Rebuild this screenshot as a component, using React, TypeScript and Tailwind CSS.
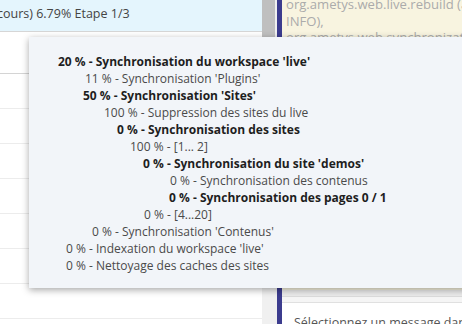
const LINES: { ml: string; bold?: boolean; text: string }[] = [
  { ml: "ml-[29px]", bold: true, text: "20 % - Synchronisation du workspace 'live'" },
  { ml: "ml-[56px]", text: "11 % - Synchronisation 'Plugins'" },
  { ml: "ml-[54px]", bold: true, text: "50 % - Synchronisation 'Sites'" },
  { ml: "ml-[75px]", text: "100 % - Suppression des sites du live" },
  { ml: "ml-[88px]", bold: true, text: "0 % - Synchronisation des sites" },
  { ml: "ml-[101px]", text: "100 % - [1... 2]" },
  { ml: "ml-[114px]", bold: true, text: "0 % - Synchronisation du site 'demos'" },
  { ml: "ml-[141px]", text: "0 % - Synchronisation des contenus" },
  { ml: "ml-[140px]", bold: true, text: "0 % - Synchronisation des pages 0 / 1" },
  { ml: "ml-[115px]", text: "0 % - [4...20]" },
  { ml: "ml-[63px]", text: "0 % - Synchronisation 'Contenus'" },
  { ml: "ml-[37px]", text: "0 % - Indexation du workspace 'live'" },
  { ml: "ml-[37px]", text: "0 % - Nettoyage des caches des sites" },
];

const ROWS = Array.from({ length: 8 });

export default function App() {
  return (
    <div className="relative flex h-[324px] w-[462px] overflow-hidden bg-white font-['Open_Sans',sans-serif] text-[12px]">
      {/* Left column */}
      <div className="flex w-[262px] shrink-0 flex-col">
        <div className="flex h-[32px] shrink-0 items-center overflow-hidden border-b border-[#d6d6d6] bg-[#e4f5fd] pb-[2px] text-[12.5px] text-[#444]">
          <span className="-ml-[3px] whitespace-nowrap">cours) 6.79% Etape 1/3</span>
        </div>
        <div className="h-[42px] shrink-0 border-b border-[#d4d4d4]" />
        {ROWS.map((_, i) => (
          <div key={i} className="h-[35px] shrink-0 border-b border-[#ececec]" />
        ))}
      </div>

      {/* Splitter */}
      <div className="flex w-[15px] shrink-0 flex-col bg-[#f0f0f0]">
        <div className="h-[120px] w-[13px] bg-[#bfbfbf]" />
      </div>

      {/* Right panel */}
      <div className="flex min-w-0 flex-1 flex-col border-l-[5px] border-[#3c3c8e]">
        <div className="h-[290px] shrink-0 overflow-hidden bg-[#f8f4e0] pl-[4px] text-[13.1px] leading-[16.5px] text-[#ababab]">
          <div className="-mt-[4px] whitespace-nowrap">org.ametys.web.live.rebuild (auto</div>
          <div>INFO),</div>
          <div className="whitespace-nowrap">org.ametys.web.synchronization</div>
        </div>
        <div className="h-[6px] shrink-0 bg-[#ebebeb]" />
        <div className="h-[6px] shrink-0 border-t border-[#dcdcdc] bg-[#f5f5f5]" />
        <div className="flex-1 overflow-hidden border-t border-[#e0e0e0] bg-white pl-[12px] pt-[11px] text-[12.5px] text-[#555]">
          <div className="whitespace-nowrap">Sélectionnez un message dans</div>
        </div>
      </div>

      {/* Progress tooltip */}
      <div className="absolute left-[29px] top-[37px] w-[460px] bg-[#f2f5f9] pb-[14px] pt-[16px] leading-[17px] text-[#4a4a4a] shadow-[0_2px_7px_rgba(0,0,0,0.35)]">
        {LINES.map((l, i) => (
          <div
            key={i}
            className={`${l.ml} whitespace-nowrap ${l.bold ? "font-bold text-[#1e1e1e]" : ""}`}
          >
            {l.text}
          </div>
        ))}
      </div>
    </div>
  );
}
